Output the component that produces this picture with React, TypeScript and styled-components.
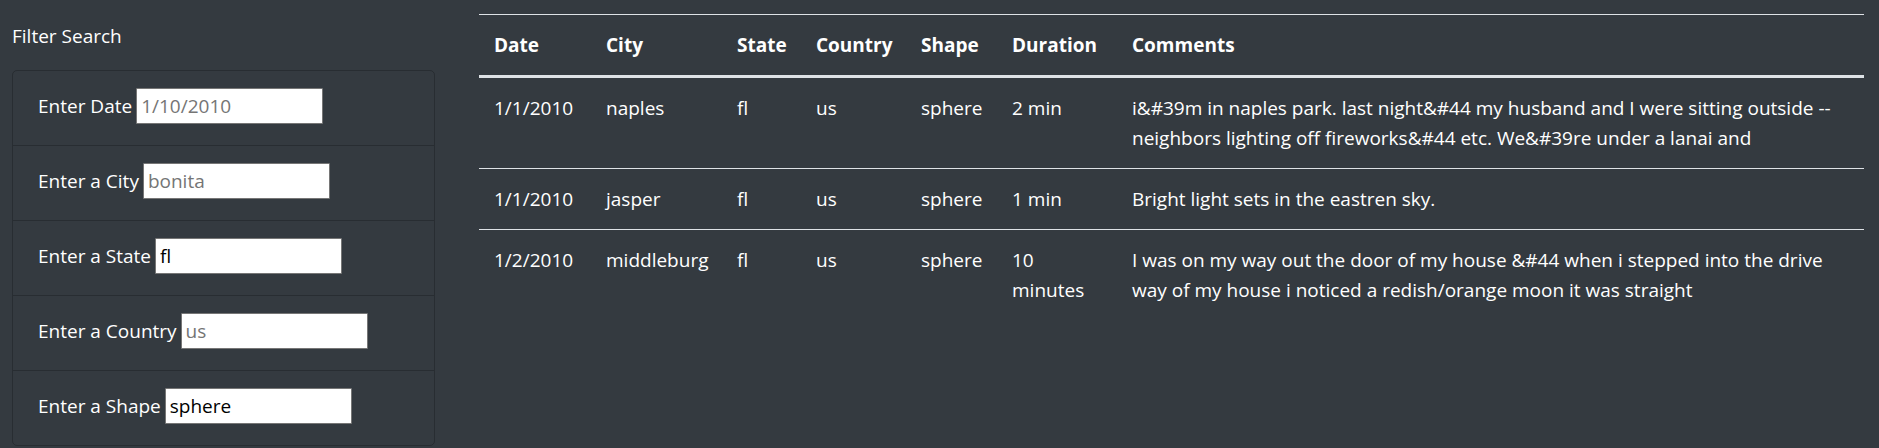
import React from "react";
import styled, { createGlobalStyle } from "styled-components";

const GlobalStyle = createGlobalStyle`
  html, body {
    margin: 0;
    padding: 0;
    background: #343a40;
  }
  body {
    font-family: "Open Sans", "Noto Sans", sans-serif;
    font-size: 19px;
    line-height: 30px;
    color: #fff;
  }
`;

const Page = styled.div`
  display: flex;
  align-items: flex-start;
  gap: 44px;
  padding: 14px 15px 0 12px;
  min-height: 448px;
  box-sizing: border-box;
`;

const Sidebar = styled.aside`
  flex: none;
  width: 423px;
  padding-top: 7px;
`;

const Title = styled.div`
  margin-bottom: 19px;
`;

const FilterList = styled.ul`
  list-style: none;
  margin: 0;
  padding: 0;
  border: 1px solid rgba(0, 0, 0, 0.22);
  border-radius: 5px;
`;

const FilterItem = styled.li`
  display: flex;
  align-items: baseline;
  gap: 4px;
  padding: 17px 25px 21px;
  & + & {
    border-top: 1px solid rgba(0, 0, 0, 0.22);
  }
`;

const Label = styled.label`
  white-space: nowrap;
  color: #fff;
`;

const Input = styled.input`
  box-sizing: border-box;
  width: 187px;
  height: 36px;
  padding: 0 4px;
  border: 1px solid #767676;
  border-radius: 1px;
  background: #fff;
  color: #000;
  font-family: inherit;
  font-size: 19px;
  outline: none;
  &::placeholder {
    color: #757575;
  }
`;

const TableWrap = styled.div`
  flex: 1;
  min-width: 0;
`;

const Table = styled.table`
  width: 100%;
  border-collapse: collapse;
  table-layout: fixed;
  color: #fff;
`;

const Col = styled.col<{ $w?: number }>`
  width: ${(p) => (p.$w ? `${p.$w}px` : "auto")};
`;

const HeadCell = styled.th`
  text-align: left;
  font-weight: 700;
  padding: 15px;
  vertical-align: bottom;
  border-top: 1px solid #dee2e6;
  border-bottom: 3px solid #dee2e6;
`;

const Cell = styled.td`
  padding: 15px;
  vertical-align: top;
  border-top: 1px solid #dee2e6;
`;

const filters = [
  { label: "Enter Date", placeholder: "1/10/2010" },
  { label: "Enter a City", placeholder: "bonita" },
  { label: "Enter a State", placeholder: "", value: "fl" },
  { label: "Enter a Country", placeholder: "us" },
  { label: "Enter a Shape", placeholder: "", value: "sphere" },
];

const columns = [
  { name: "Date", w: 112 },
  { name: "City", w: 131 },
  { name: "State", w: 79 },
  { name: "Country", w: 105 },
  { name: "Shape", w: 91 },
  { name: "Duration", w: 120 },
  { name: "Comments" },
];

const rows = [
  [
    "1/1/2010",
    "naples",
    "fl",
    "us",
    "sphere",
    "2 min",
    "i&#39m in naples park. last night&#44 my husband and I were sitting outside -- neighbors lighting off fireworks&#44 etc. We&#39re under a lanai and",
  ],
  ["1/1/2010", "jasper", "fl", "us", "sphere", "1 min", "Bright light sets in the eastren sky."],
  [
    "1/2/2010",
    "middleburg",
    "fl",
    "us",
    "sphere",
    "10 minutes",
    "I was on my way out the door of my house &#44 when i stepped into the drive way of my house i noticed a redish/orange moon it was straight",
  ],
];

export default function App() {
  return (
    <>
      <GlobalStyle />
      <Page>
        <Sidebar>
          <Title>Filter Search</Title>
          <FilterList>
            {filters.map((f) => (
              <FilterItem key={f.label}>
                <Label>{f.label}</Label>
                <Input type="text" placeholder={f.placeholder} defaultValue={f.value} />
              </FilterItem>
            ))}
          </FilterList>
        </Sidebar>
        <TableWrap>
          <Table>
            <colgroup>
              {columns.map((c) => (
                <Col key={c.name} $w={c.w} />
              ))}
            </colgroup>
            <thead>
              <tr>
                {columns.map((c) => (
                  <HeadCell key={c.name}>{c.name}</HeadCell>
                ))}
              </tr>
            </thead>
            <tbody>
              {rows.map((r, i) => (
                <tr key={i}>
                  {r.map((v, j) => (
                    <Cell key={j}>{v}</Cell>
                  ))}
                </tr>
              ))}
            </tbody>
          </Table>
        </TableWrap>
      </Page>
    </>
  );
}
